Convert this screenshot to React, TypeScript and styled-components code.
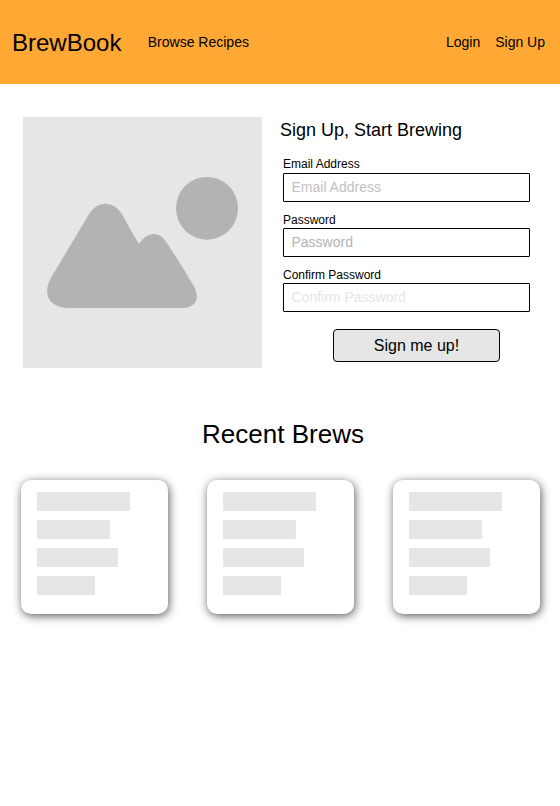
import React from "react";
import styled, { createGlobalStyle } from "styled-components";

const GlobalStyle = createGlobalStyle`
  *, *::before, *::after { box-sizing: border-box; }
  body {
    margin: 0;
    background: #fff;
    color: #000;
    font-family: "Liberation Sans", Arial, Helvetica, sans-serif;
  }
`;

const Page = styled.div`
  width: 560px;
  min-height: 806px;
`;

const Header = styled.header`
  display: flex;
  align-items: center;
  height: 84px;
  padding: 0 15px 0 12px;
  background: #ffa834;
`;

const Brand = styled.a`
  margin: 2px 26.4px 0 0;
  font-size: 24px;
  line-height: 28px;
`;

const NavLink = styled.a`
  font-size: 14px;
  line-height: 16px;
`;

const AccountNav = styled.nav`
  display: flex;
  gap: 15px;
  margin-left: auto;
`;

const Hero = styled.section`
  display: flex;
  gap: 18px;
  padding: 33px 30px 0 23px;
`;

const Picture = styled.svg`
  display: block;
  flex: none;
  width: 239px;
  height: 251px;
  background: #e6e6e6;
`;

const SignUpForm = styled.form`
  flex: 1;
  display: flex;
  flex-direction: column;
`;

const FormTitle = styled.h1`
  margin: 3px 0 16px;
  font-size: 18px;
  font-weight: 400;
  line-height: 21px;
`;

const Field = styled.label`
  display: flex;
  flex-direction: column;
  justify-content: flex-end;
  height: 45px;
  margin: 0 0 10px 3px;
  font-size: 12px;
  line-height: 14px;
`;

const Input = styled.input<{ $hint: string; $gap: number }>`
  width: 247px;
  height: 29px;
  margin-top: ${(p) => p.$gap}px;
  padding: 0 7px 1px 7.5px;
  border: 1px solid #000;
  border-radius: 1px;
  background: #fff;
  font: 14px "Liberation Sans", Arial, sans-serif;
  outline: none;

  &::placeholder {
    color: ${(p) => p.$hint};
    opacity: 1;
  }
`;

const SubmitButton = styled.button`
  width: 167px;
  height: 33px;
  margin: 7px 0 0 53px;
  padding: 0;
  border: 1px solid #000;
  border-radius: 4px;
  background: #e6e6e6;
  color: #000;
  font: 16px "Liberation Sans", Arial, sans-serif;
`;

const Recent = styled.section`
  padding: 51px 20px 0 21px;
`;

const RecentTitle = styled.h2`
  margin: 0 0 31px;
  padding-left: 5px;
  font-size: 26px;
  font-weight: 400;
  line-height: 30px;
  text-align: center;
`;

const CardRow = styled.div`
  display: grid;
  grid-template-columns: repeat(3, 147px);
  gap: 39px;
`;

const Card = styled.article`
  display: flex;
  flex-direction: column;
  gap: 9px;
  height: 134px;
  padding: 12px 16px;
  border-radius: 10px;
  background: #fff;
  box-shadow: 1px 2px 10px rgba(0, 0, 0, 0.65);
`;

const Bar = styled.div<{ $width: number }>`
  width: ${(p) => p.$width}px;
  height: 19px;
  border-radius: 1px;
  background: #e6e6e6;
`;

const fields = [
  { label: "Email Address", type: "email", hint: "#c2c2c2", gap: 2 },
  { label: "Password", type: "password", hint: "#b3b3b3", gap: 1 },
  { label: "Confirm Password", type: "password", hint: "#e6e6e6", gap: 1 },
];

const brews = ["first", "second", "third"];
const barWidths = [93, 73, 81, 58];

export default function App() {
  return (
    <>
      <GlobalStyle />
      <Page>
        <Header>
          <Brand>BrewBook</Brand>
          <NavLink>Browse Recipes</NavLink>
          <AccountNav>
            <NavLink>Login</NavLink>
            <NavLink>Sign Up</NavLink>
          </AccountNav>
        </Header>
        <main>
          <Hero>
            <Picture viewBox="0 0 239 251" aria-hidden="true">
              <g fill="#b3b3b3">
                <ellipse cx="184" cy="91.3" rx="31" ry="31.4" />
                <path d="M65.5 98C74.5 82.8 90.5 83 99.5 98C105 108 110 117.500 116 127C124 114 136.500 113.500 144 126C153 139.500 162 154 170.700 169C177.500 181.500 173 190.500 160 191H46.500C26 191 18.500 177.500 28.500 160Z" />
              </g>
            </Picture>
            <SignUpForm>
              <FormTitle>Sign Up, Start Brewing</FormTitle>
              {fields.map((f) => (
                <Field key={f.label}>
                  {f.label}
                  <Input
                    type={f.type}
                    placeholder={f.label}
                    $hint={f.hint}
                    $gap={f.gap}
                  />
                </Field>
              ))}
              <SubmitButton type="button">Sign me up!</SubmitButton>
            </SignUpForm>
          </Hero>
          <Recent>
            <RecentTitle>Recent Brews</RecentTitle>
            <CardRow>
              {brews.map((b) => (
                <Card key={b}>
                  {barWidths.map((w) => (
                    <Bar key={w} $width={w} />
                  ))}
                </Card>
              ))}
            </CardRow>
          </Recent>
        </main>
      </Page>
    </>
  );
}
